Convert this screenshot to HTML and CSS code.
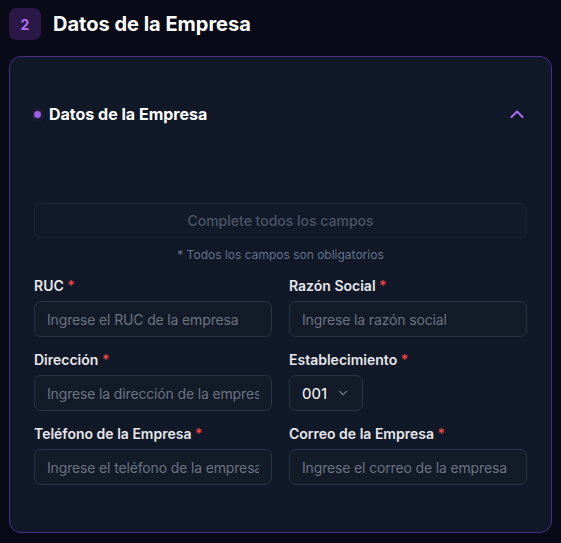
FILE: index.html
```html
<!DOCTYPE html>
<html lang="es">
<head>
    <meta charset="UTF-8">
    <meta name="viewport" content="width=device-width, initial-scale=1.0">
    <title>Datos de la Empresa</title>
    <link rel="stylesheet" href="styles.css">
</head>
<body>
    <div class="step-header">
        <span class="step-badge">2</span>
        <h1>Datos de la Empresa</h1>
    </div>

    <div class="card">
        <div class="section-header">
            <div class="section-title">
                <span class="dot"></span>
                <h2>Datos de la Empresa</h2>
            </div>
            <svg class="chevron-up" width="14" height="8" viewBox="0 0 14 8" fill="none" stroke="currentColor" stroke-width="2" stroke-linecap="round" stroke-linejoin="round">
                <path d="M1.5 7L7 1.5 12.5 7"/>
            </svg>
        </div>

        <div class="section-body">
            <div class="notice">Complete todos los campos</div>
            <p class="hint">* Todos los campos son obligatorios</p>

            <div class="grid">
                <div class="field">
                    <label for="ruc">RUC <span class="req">*</span></label>
                    <input type="text" id="ruc" placeholder="Ingrese el RUC de la empresa">
                </div>
                <div class="field">
                    <label for="razon">Razón Social <span class="req">*</span></label>
                    <input type="text" id="razon" placeholder="Ingrese la razón social">
                </div>
                <div class="field">
                    <label for="direccion">Dirección <span class="req">*</span></label>
                    <input type="text" id="direccion" placeholder="Ingrese la dirección de la empresa">
                </div>
                <div class="field">
                    <label for="establecimiento">Establecimiento <span class="req">*</span></label>
                    <div class="select">
                        <span>001</span>
                        <svg width="14" height="14" viewBox="0 0 24 24" fill="none" stroke="currentColor" stroke-width="2" stroke-linecap="round" stroke-linejoin="round">
                            <path d="M6 9l6 6 6-6"/>
                        </svg>
                    </div>
                </div>
                <div class="field">
                    <label for="telefono">Teléfono de la Empresa <span class="req">*</span></label>
                    <input type="text" id="telefono" placeholder="Ingrese el teléfono de la empresa">
                </div>
                <div class="field">
                    <label for="correo">Correo de la Empresa <span class="req">*</span></label>
                    <input type="text" id="correo" placeholder="Ingrese el correo de la empresa">
                </div>
            </div>
        </div>
    </div>
</body>
</html>
```

FILE: styles.css
```css
body {
    font-family: Inter, "Noto Sans", sans-serif;
    margin: 0;
    padding: 8px 9px 10px;
    background-color: #090a17;
    color: #f3f4f6;
}
.step-header {
    display: flex;
    align-items: center;
    gap: 12px;
    height: 32px;
}
.step-badge {
    width: 32px;
    height: 32px;
    border-radius: 7px;
    background: #2a1846;
    color: #b06cf0;
    font-size: 14px;
    font-weight: 700;
    display: flex;
    align-items: center;
    justify-content: center;
}
h1 {
    margin: 0;
    font-size: 20px;
    font-weight: 700;
    color: #fff;
}
.card {
    margin-top: 16px;
    background: #111827;
    border: 1px solid #4a2d86;
    border-radius: 12px;
    padding: 45px 24px 47px;
}
.section-header {
    display: flex;
    align-items: center;
    justify-content: space-between;
    height: 24px;
}
.section-title {
    display: flex;
    align-items: center;
    gap: 8px;
}
.dot {
    width: 7px;
    height: 7px;
    border-radius: 50%;
    background: #9b5fe0;
    box-shadow: 0 0 6px rgba(155, 95, 224, 0.35);
}
h2 {
    margin: 0;
    font-size: 16px;
    font-weight: 700;
    color: #fff;
}
.chevron-up {
    color: #a46ff0;
    margin-right: 3px;
}
.section-body {
    padding-top: 77px;
}
.notice {
    box-sizing: border-box;
    height: 35px;
    border: 1px solid #1b2436;
    background: #121a29;
    border-radius: 7px;
    display: flex;
    align-items: center;
    justify-content: center;
    font-size: 14px;
    font-weight: 500;
    color: #4b5567;
}
.hint {
    margin: 9px 0 13px;
    text-align: center;
    font-size: 12px;
    color: #64748b;
    line-height: 16px;
}
.grid {
    display: grid;
    grid-template-columns: 1fr 1fr;
    column-gap: 17px;
    row-gap: 13px;
}
.field {
    display: flex;
    flex-direction: column;
    align-items: flex-start;
}
label {
    font-size: 14px;
    font-weight: 600;
    color: #e5e7eb;
    line-height: 20px;
    margin-bottom: 5px;
}
.req {
    color: #ef4444;
}
input {
    box-sizing: border-box;
    width: 100%;
    height: 36px;
    padding: 0 12px;
    background: #131b29;
    border: 1px solid #2b3446;
    border-radius: 7px;
    font-family: inherit;
    font-size: 14px;
    letter-spacing: -0.15px;
    color: #e5e7eb;
}
input::placeholder {
    color: #6b7280;
}
.select {
    box-sizing: border-box;
    width: 74px;
    height: 36px;
    padding: 0 12px;
    display: flex;
    align-items: center;
    justify-content: space-between;
    background: #131b29;
    border: 1px solid #2b3446;
    border-radius: 7px;
    font-size: 15px;
    color: #fff;
}
.select svg {
    color: #6b7280;
}
```
